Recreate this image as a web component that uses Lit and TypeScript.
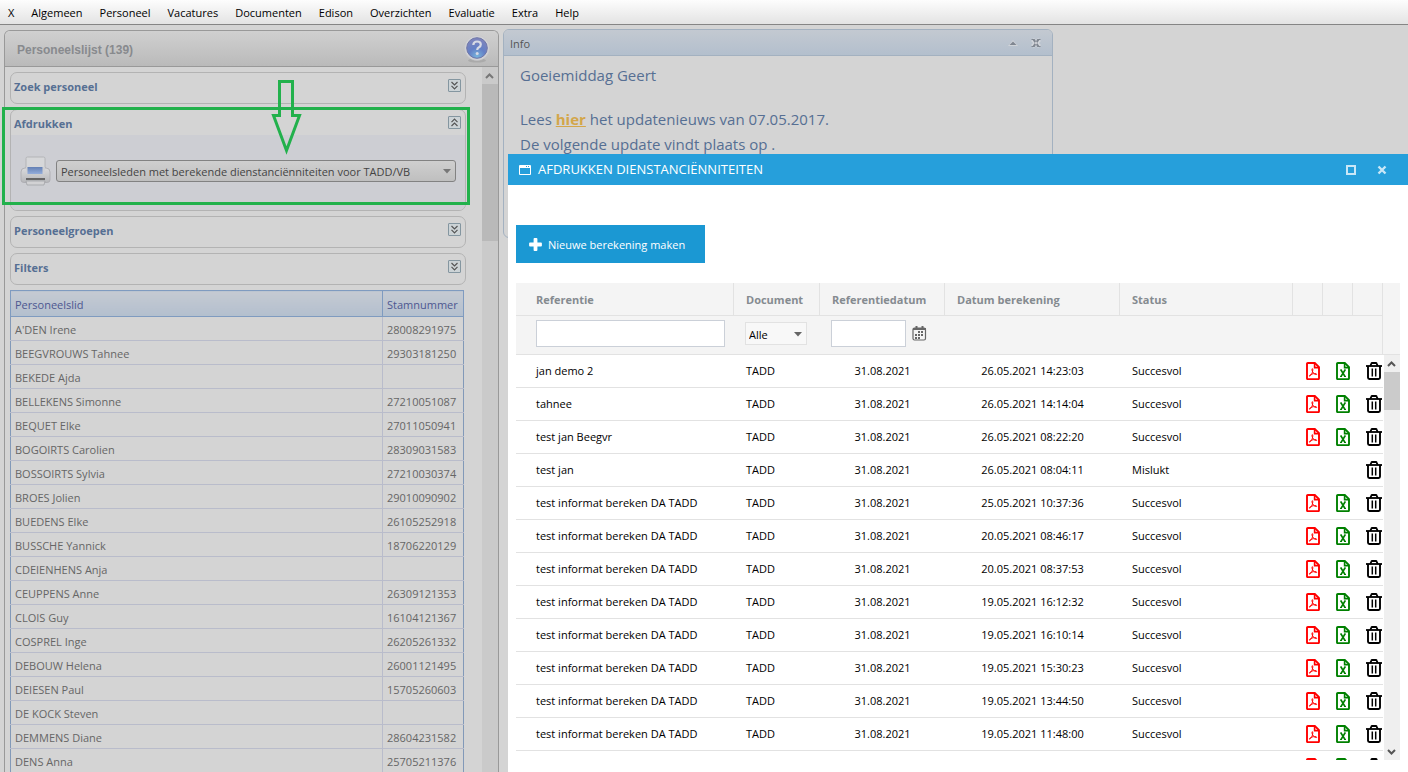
import { LitElement, html, css, svg } from "lit";
import { customElement, property } from "lit/decorators.js";

const MENU = ["X", "Algemeen", "Personeel", "Vacatures", "Documenten", "Edison", "Overzichten", "Evaluatie", "Extra", "Help"];

const STAFF: [string, string][] = [
  ["A'DEN Irene", "28008291975"],
  ["BEEGVROUWS Tahnee", "29303181250"],
  ["BEKEDE Ajda", ""],
  ["BELLEKENS Simonne", "27210051087"],
  ["BEQUET Elke", "27011050941"],
  ["BOGOIRTS Carolien", "28309031583"],
  ["BOSSOIRTS Sylvia", "27210030374"],
  ["BROES Jolien", "29010090902"],
  ["BUEDENS Elke", "26105252918"],
  ["BUSSCHE Yannick", "18706220129"],
  ["CDEIENHENS Anja", ""],
  ["CEUPPENS Anne", "26309121353"],
  ["CLOIS Guy", "16104121367"],
  ["COSPREL Inge", "26205261332"],
  ["DEBOUW Helena", "26001121495"],
  ["DEIESEN Paul", "15705260603"],
  ["DE KOCK Steven", ""],
  ["DEMMENS Diane", "28604231582"],
  ["DENS Anna", "25705211376"],
];

const BULK = "test informat bereken DA TADD";
type Run = { ref: string; doc: string; date: string; run: string; status: string };
const done = (ref: string, run: string, status = "Succesvol"): Run => ({ ref, doc: "TADD", date: "31.08.2021", run, status });
const RUNS: Run[] = [
  done("jan demo 2", "26.05.2021 14:23:03"),
  done("tahnee", "26.05.2021 14:14:04"),
  done("test jan Beegvr", "26.05.2021 08:22:20"),
  done("test jan", "26.05.2021 08:04:11", "Mislukt"),
  done(BULK, "25.05.2021 10:37:36"),
  done(BULK, "20.05.2021 08:46:17"),
  done(BULK, "20.05.2021 08:37:53"),
  done(BULK, "19.05.2021 16:12:32"),
  done(BULK, "19.05.2021 16:10:14"),
  done(BULK, "19.05.2021 15:30:23"),
  done(BULK, "19.05.2021 13:44:50"),
  done(BULK, "19.05.2021 11:48:00"),
  { ref: "", doc: "", date: "", run: "", status: "" },
];

const page = svg`<path d="M1.800 1h7l4.200 4.200v11.300a.6.6 0 0 1-.6.6H1.600a.6.6 0 0 1-.6-.6V1.800A.8.8 0 0 1 1.800 1z" fill="none" stroke="currentColor" stroke-width="1.900"/><path d="M8.600 1v4.600H13" fill="none" stroke="currentColor" stroke-width="1.600"/>`;
const pdfIcon = html`<svg width="14" height="18" viewBox="0 0 14 18" aria-hidden="true">${page}<path d="M6.300 6.600c.8 0 .5 2.200.1 3.600C5.800 12 4.600 14 3.700 14.200c-.8.1-.4-1 1-1.700 1.500-.7 3.800-1.100 5.300-.8 1.300.4.7 1.200-.4.8C8 12 6.500 10.300 6.100 8.500c-.2-1-.2-1.900.2-1.900z" fill="none" stroke="currentColor" stroke-width="1"/></svg>`;
const xlsIcon = html`<svg width="14" height="18" viewBox="0 0 14 18" aria-hidden="true">${page}<path d="M5 8l4 6.500M9 8l-4 6.500" fill="none" stroke="currentColor" stroke-width="1.600"/><path d="M4 8h2M8 8h2M4 14.500h2M8 14.500h2" stroke="currentColor" stroke-width="1"/></svg>`;
const binIcon = html`<svg width="16" height="18" viewBox="0 0 16 18" aria-hidden="true"><g fill="none" stroke="currentColor"><path d="M0 4h16" stroke-width="1.800"/><path d="M4.300 4l1-2.400Q5.500 1 6.200 1h3.600q.7 0 .9.600l1 2.400" stroke-width="1.800"/><path d="M2 4v11.600Q2 17 3.400 17h9.200q1.400 0 1.400-1.400V4" stroke-width="1.900"/><path d="M6.300 6.500v8M9.700 6.500v8" stroke-width="1.500"/></g></svg>`;

@customElement("collapse-section")
class CollapseSection extends LitElement {
  @property() heading = "";
  @property({ type: Boolean }) open = false;
  static styles = css`
    :host { display: block; box-sizing: border-box; border: 1px solid #b3b3b3; border-radius: 7px; overflow: hidden; }
    .head { display: flex; align-items: center; justify-content: space-between; height: 25px; padding: 0 4px 0 3px; }
    h3 { margin: 0; padding-top: 3px; font-size: 11px; line-height: 20px; color: #566f93; }
    button { width: 13px; height: 13px; padding: 0; border: 1px solid #8496a0; border-radius: 1px; background: #ccd3d6; display: grid; place-items: center; color: #555; }
    .body { background: #cdced3; height: 75px; }
    .foot { height: 5px; }
    .flip { transform: scaleY(-1); }
  `;
  render() {
    return html`
      <div class="head">
        <h3>${this.heading}</h3>
        <button aria-label=${this.heading} aria-expanded=${this.open}>
          <svg class=${this.open ? "flip" : ""} width="9" height="9" viewBox="0 0 9 9"><path d="M1.500 1l3 3 3-3M1.500 4.800l3 3 3-3" fill="none" stroke="currentColor" stroke-width="1.200"/></svg>
        </button>
      </div>
      ${this.open ? html`<div class="body"><slot></slot></div>` : html`<div class="foot"></div>`}
    `;
  }
}

@customElement("scroll-rail")
class ScrollRail extends LitElement {
  @property({ type: Boolean }) endless = false;
  static styles = css`
    :host { display: flex; flex-direction: column; }
    svg { display: block; width: 100%; height: 17px; flex: none; }
    .thumb { background: var(--thumb); height: var(--thumb-size); }
    .rest { flex: 1; }
    path { fill: none; stroke: var(--arrow); stroke-width: 2; }
  `;
  render() {
    return html`
      <svg viewBox="0 0 16 17"><path d="M4 11l3.500-3.500L11 11"/></svg>
      <div class="thumb"></div>
      <div class="rest"></div>
      ${this.endless ? "" : html`<svg viewBox="0 0 16 17"><path d="M4 7l3.500 3.500L11 7"/></svg>`}
    `;
  }
}

@customElement("app-root")
class AppRoot extends LitElement {
  static styles = css`
    :host { display: flex; flex-direction: column; position: relative; height: 100vh; overflow: hidden; background: #d4d4d4; font: 11px/16px "Open Sans", "Noto Sans", sans-serif; color: #000; }
    * { box-sizing: border-box; }
    table { border-collapse: collapse; table-layout: fixed; width: 100%; }
    th, td { padding: 0; text-align: left; font-weight: normal; white-space: nowrap; }
    button, input, select { font: inherit; color: inherit; }

    .menu { display: flex; flex: none; gap: 17px; height: 25px; padding: 2px 8px 0; align-items: center; background: linear-gradient(#fdfdfd, #e3e3e3); border-bottom: 1px solid #858585; }
    .menu a { color: #000; text-decoration: none; }

    .desk { display: flex; flex: 1; min-height: 0; align-items: flex-start; gap: 4px; padding: 4px 0 0 4px; }
    .staff { display: flex; flex-direction: column; width: 495px; height: 100%; margin-top: 1px; border: 1px solid #999; border-bottom: 0; border-radius: 6px 6px 0 0; }
    .staff-head { display: flex; flex: none; align-items: center; justify-content: space-between; height: 36px; padding: 0 8px 0 12px; background: linear-gradient(#d0d0d0, #bababa); border-bottom: 1px solid #999; border-radius: 5px 5px 0 0; }
    .staff-head h2 { margin: 0; padding-top: 2px; font: bold 12px/16px "Liberation Sans", Arial, sans-serif; color: #888a8e; }
    .help { width: 26px; height: 28px; padding: 0; border: 0; background: none; }
    .help svg { display: block; }
    .staff-body { display: flex; flex: 1; min-height: 0; justify-content: space-between; }
    .sections { display: flex; flex-direction: column; gap: 5px; width: 456px; margin: 5px 0 0 5px; overflow: hidden; }
    .sections > * { flex: none; }
    .staff-rail { width: 16px; background: #cacaca; --thumb: #b9b9b9; --thumb-size: 157px; --arrow: #777; }

    .print { display: flex; align-items: center; gap: 5px; height: 72px; padding: 0 9px; }
    .print svg.printer { flex: none; }
    .pick { position: relative; display: flex; flex: 1; }
    .pick select { width: 100%; appearance: none; }
    .pick svg { position: absolute; right: 4px; top: 50%; margin-top: -2px; pointer-events: none; }
    .print select { height: 22px; padding: 1px 20px 0 4px; border: 1px solid #828282; border-radius: 3px; background: linear-gradient(#cfcfcf, #bfbfbf); color: #444; }

    .people { width: 454px; border: 1px solid #8299b8; color: #666; }
    .people .nr { width: 81px; }
    .people th { height: 26px; padding: 3px 0 0 4px; background: linear-gradient(#c5cad2, #b3bfce); border: 1px solid #7f9bc0; color: #4d5791; }
    .people td { height: 24px; padding: 2px 0 0 4px; border: 1px solid #b9bccb; }
    .people td:first-child { border-left-color: #8299b8; }
    .people td:last-child { border-right-color: #8299b8; }

    .info { width: 550px; height: 209px; border: 1px solid #a3b1c0; border-radius: 6px; overflow: hidden; }
    .info-head { display: flex; align-items: center; height: 26px; padding: 0 10px 0 6px; gap: 12px; background: linear-gradient(#c3c9d1, #b3bfcd); border-bottom: 1px solid #a3b1c0; color: #555; }
    .info-head h2 { flex: 1; margin: 0; padding-top: 2px; font-size: 11px; font-weight: normal; }
    .info-head button { display: block; padding: 0; border: 0; background: none; color: #808791; }
    .info-head svg { display: block; }
    .info-text { padding: 7px 16px; font-size: 15px; line-height: 25px; color: #566f93; }
    .info-text p { margin: 0; }
    .info-text p:first-child { margin-bottom: 19px; }
    .info-text a { color: #d3a64a; font-weight: bold; }

    .marks { position: absolute; left: 2px; top: 79px; pointer-events: none; }

    .dialog { position: absolute; left: 508px; top: 154px; right: 0; bottom: 0; display: flex; flex-direction: column; background: #fff; }
    .bar { display: flex; flex: none; align-items: center; height: 31px; padding: 0 20px 0 11px; background: #269fdb; color: #fff; }
    .bar h1 { flex: 1; margin: 0 0 0 7px; padding-bottom: 2px; font-size: 13px; font-weight: normal; }
    .bar button { width: 12px; height: 12px; margin-left: 19px; padding: 0; border: 0; background: none; color: #c9e7f7; }
    .bar svg { display: block; }
    .work { display: flex; flex: 1; flex-direction: column; min-height: 0; align-items: flex-start; gap: 20px; padding: 40px 8px 12px; }
    .new { display: flex; flex: none; align-items: center; gap: 6px; height: 38px; padding: 0 16px 0 13px; min-width: 189px; border: 0; background: #1b98d3; color: #fff; }
    .new span { padding-top: 2px; }
    .grid { display: flex; flex: 1; flex-direction: column; min-height: 0; width: 100%; }
    .grid table { border-collapse: separate; border-spacing: 0; }
    .top { display: flex; flex: none; padding-right: 17px; background: #f4f4f4; border-bottom: 1px solid #e2e2e2; }
    .top th { height: 33px; padding: 2px 0 0 12px; border-right: 1px solid #e2e2e2; border-bottom: 1px solid #e2e2e2; color: #858b90; font-weight: bold; }
    .top td { height: 38px; padding: 4px 0 0 11px; vertical-align: top; }
    .top td:last-child { border-right: 1px solid #e2e2e2; }
    .top th:first-child, .top td:first-child, .rows td:first-child { padding-left: 20px; }
    .top input { display: block; width: 189px; height: 27px; padding: 0 6px; border: 1px solid #cbd0d8; background: #fff; }
    .top input.date { width: 75px; }
    .top .pick { width: 62px; margin-top: 2px; }
    .top select { height: 23px; padding: 2px 16px 0 3px; border: 1px solid #e2e2e2; border-radius: 0; background: #f8f8f8; }
    .day { display: flex; align-items: center; gap: 6px; }
    .day button, .rows button { display: block; padding: 0; border: 0; background: none; }
    .day svg, .rows svg { display: block; }
    .c-ref { width: 218px; } .c-doc { width: 86px; } .c-date { width: 125px; } .c-run { width: 175px; } .c-act { width: 30px; }
    .scroll { display: flex; flex: 1; min-height: 0; gap: 1px; }
    .rows { flex: 1; overflow: hidden; }
    .rows td { height: 33px; padding-left: 12px; border-bottom: 1px solid #e2e2e2; }
    .rows td.mid { padding: 0; text-align: center; }
    .rows td.act { padding-left: 13px; }
    .pdf { color: #f00; } .xls { color: #008000; } .bin { color: #000; }
    .grid-rail { width: 16px; background: #efefef; --thumb: #cbcbcb; --thumb-size: 38px; --arrow: #555; }
  `;

  cols() {
    return html`<colgroup><col class="c-ref"><col class="c-doc"><col class="c-date"><col class="c-run"><col><col class="c-act"><col class="c-act"><col class="c-act"></colgroup>`;
  }

  caret(color: string) {
    return html`<svg width="9" height="5" viewBox="0 0 9 5" aria-hidden="true"><path d="M0 0h8L4 4.500z" fill=${color}/></svg>`;
  }

  staff() {
    return html`
      <section class="staff">
        <div class="staff-head">
          <h2>Personeelslijst (139)</h2>
          <button class="help" aria-label="Help">
            <svg width="26" height="28" viewBox="0 0 26 28">
              <defs><radialGradient id="ball" cx=".5" cy=".9" r=".8"><stop offset="0" stop-color="#78b4dc"/><stop offset=".5" stop-color="#6480c6"/><stop offset="1" stop-color="#7c84bd"/></radialGradient></defs>
              <ellipse cx="13" cy="25.500" rx="9" ry="2" fill="#aaa"/>
              <circle cx="13" cy="13" r="12.500" fill="#d2d3d6" stroke="#c4c4c8" stroke-width=".6"/>
              <circle cx="13" cy="13" r="10.300" fill="url(#ball)" stroke="#6f77a8"/>
              <path d="M9.300 10q.2-3.500 3.800-3.500 3.700 0 3.700 3 0 1.600-1.800 2.700-1.800 1-1.800 2.700" fill="none" stroke="#d8dae4" stroke-width="2.200"/>
              <circle cx="13.200" cy="18.400" r="1.500" fill="#d8dae4"/>
            </svg>
          </button>
        </div>
        <div class="staff-body">
          <div class="sections">
            <collapse-section heading="Zoek personeel"></collapse-section>
            <collapse-section heading="Afdrukken" open>
              <div class="print">
                <svg class="printer" width="31" height="30" viewBox="0 0 31 30" aria-hidden="true">
                  <defs><linearGradient id="case" x2="0" y2="1"><stop offset="0" stop-color="#dadadc"/><stop offset="1" stop-color="#b6b7ba"/></linearGradient><linearGradient id="ink" x2="0" y2="1"><stop offset="0" stop-color="#6380b4"/><stop offset="1" stop-color="#94addb"/></linearGradient></defs>
                  <path d="M1 16q0-4 4-4h21q4 0 4 4v8q0 2.500-3 2.500H4q-3 0-3-2.500z" fill="url(#case)" stroke="#a9aaae" stroke-width=".8"/>
                  <path d="M6 12V2.500Q6 1 7.500 1h16Q25 1 25 2.500V12z" fill="#d6d7d9" stroke="#acadb0" stroke-width=".8"/>
                  <path d="M6 11h19v7H6z" fill="#cfd0d3"/>
                  <path d="M7.500 11h15v7h-15z" fill="url(#ink)"/>
                  <path d="M6 22h19v2H6z" fill="#666"/>
                  <path d="M6 25h19l-1 4H7z" fill="#d2d2d4" stroke="#9c9da0" stroke-width=".7"/>
                </svg>
                <div class="pick">
                  <select aria-label="Afdrukken"><option>Personeelsleden met berekende dienstanciënniteiten voor TADD/VB</option></select>
                  ${this.caret("#777")}
                </div>
              </div>
            </collapse-section>
            <collapse-section heading="Personeelgroepen"></collapse-section>
            <collapse-section heading="Filters"></collapse-section>
            <table class="people">
              <colgroup><col><col class="nr"></colgroup>
              <thead><tr><th>Personeelslid</th><th>Stamnummer</th></tr></thead>
              <tbody>${STAFF.map(([name, nr]) => html`<tr><td>${name}</td><td>${nr}</td></tr>`)}</tbody>
            </table>
          </div>
          <scroll-rail class="staff-rail" endless></scroll-rail>
        </div>
      </section>
    `;
  }

  info() {
    return html`
      <section class="info">
        <div class="info-head">
          <h2>Info</h2>
          <button aria-label="Inklappen"><svg width="10" height="8" viewBox="0 0 10 8"><path d="M0 7h10L5 1z" fill="#d0d4d9"/><path d="M1.500 6h7L5 2.500z" fill="currentColor"/></svg></button>
          <button aria-label="Sluiten"><svg width="12" height="10" viewBox="0 0 12 10"><path d="M2.500 1.500l7 7M9.500 1.500l-7 7" stroke="#d4d7dc" stroke-width="4"/><path d="M2 1h2.500L10 9H7.500zM10 1H7.500L2 9h2.500z" fill="currentColor"/><path d="M1.500 1.500h3M7.500 1.500h3M1.500 8.500h3M7.500 8.500h3" stroke="currentColor"/></svg></button>
        </div>
        <div class="info-text">
          <p>Goeiemiddag Geert</p>
          <p>Lees <a href="#">hier</a> het updatenieuws van 07.05.2017.</p>
          <p>De volgende update vindt plaats op .</p>
        </div>
      </section>
    `;
  }

  dialog() {
    return html`
      <section class="dialog" role="dialog" aria-labelledby="title">
        <header class="bar">
          <svg width="12" height="11" viewBox="0 0 12 11" aria-hidden="true"><path d="M.5 1.500h11v9H.5zM0 3.500h12" fill="none" stroke="#fff"/><path d="M0 2.500h7M8 2.500h1M10 2.500h2" stroke="#fff"/></svg>
          <h1 id="title">AFDRUKKEN DIENSTANCIËNNITEITEN</h1>
          <button aria-label="Maximaliseren"><svg width="12" height="12" viewBox="0 0 12 12"><path d="M2 2h8v8H2z" fill="none" stroke="currentColor" stroke-width="2"/></svg></button>
          <button aria-label="Sluiten"><svg width="12" height="12" viewBox="0 0 12 12"><path d="M2.500 2.500l7 7M9.500 2.500l-7 7" stroke="currentColor" stroke-width="2.400"/></svg></button>
        </header>
        <div class="work">
          <button class="new">
            <svg width="13" height="13" viewBox="0 0 13 13" aria-hidden="true"><path d="M5.500 1h2v4.500H12v2H7.500V12h-2V7.500H1v-2h4.500z" fill="#fff" stroke="#fff" stroke-width="1.800" stroke-linejoin="round"/></svg>
            <span>Nieuwe berekening maken</span>
          </button>
          <div class="grid">
            <div class="top">
              <table>
                ${this.cols()}
                <thead>
                  <tr><th>Referentie</th><th>Document</th><th>Referentiedatum</th><th>Datum berekening</th><th>Status</th><th></th><th></th><th></th></tr>
                </thead>
                <tbody>
                  <tr>
                    <td><input type="text" aria-label="Referentie"></td>
                    <td><div class="pick"><select aria-label="Document"><option>Alle</option></select>${this.caret("#666")}</div></td>
                    <td>
                      <div class="day">
                        <input class="date" type="text" aria-label="Referentiedatum">
                        <button aria-label="Kalender"><svg width="15" height="15" viewBox="0 0 15 15"><rect x="1" y="2" width="12.500" height="12" rx="1.500" fill="none" stroke="#666" stroke-width="1.200"/><path d="M1 3h13M4.500 0v3M10.500 0v3" stroke="#666" stroke-width="2"/><path d="M6 5h2v2H6zM9 5h2v2H9zM3 8h2v2H3zM6 8h2v2H6zM9 8h2v2H9zM3 11h2v1.500H3zM6 11h2v1.500H6z" fill="#666" shape-rendering="crispEdges"/></svg></button>
                      </div>
                    </td>
                    <td></td><td></td><td></td><td></td><td></td>
                  </tr>
                </tbody>
              </table>
            </div>
            <div class="scroll">
              <div class="rows">
                <table>
                  ${this.cols()}
                  <tbody>
                    ${RUNS.map((r) => {
                      const files = r.status !== "Mislukt";
                      return html`<tr>
                      <td>${r.ref}</td><td>${r.doc}</td><td class="mid">${r.date}</td><td class="mid">${r.run}</td><td>${r.status}</td>
                      <td class="act">${files ? html`<button class="pdf" aria-label="PDF">${pdfIcon}</button>` : ""}</td>
                      <td class="act">${files ? html`<button class="xls" aria-label="Excel">${xlsIcon}</button>` : ""}</td>
                      <td class="act"><button class="bin" aria-label="Verwijderen">${binIcon}</button></td>
                    </tr>`;
                    })}
                  </tbody>
                </table>
              </div>
              <scroll-rail class="grid-rail"></scroll-rail>
            </div>
          </div>
        </div>
      </section>
    `;
  }

  render() {
    return html`
      <nav class="menu">${MENU.map((m) => html`<a href="#">${m}</a>`)}</nav>
      <main class="desk">${this.staff()}${this.info()}</main>
      <svg class="marks" width="469" height="127" viewBox="0 0 469 127" aria-hidden="true">
        <path d="M1.500 29.500h465v95h-465z" fill="none" stroke="#22b14c" stroke-width="3"/>
        <path d="M277.500 2.500h13v34h7L284.500 71.500 271.500 36.500h6z" fill="none" stroke="#22b14c" stroke-width="3"/>
      </svg>
      ${this.dialog()}
    `;
  }
}
